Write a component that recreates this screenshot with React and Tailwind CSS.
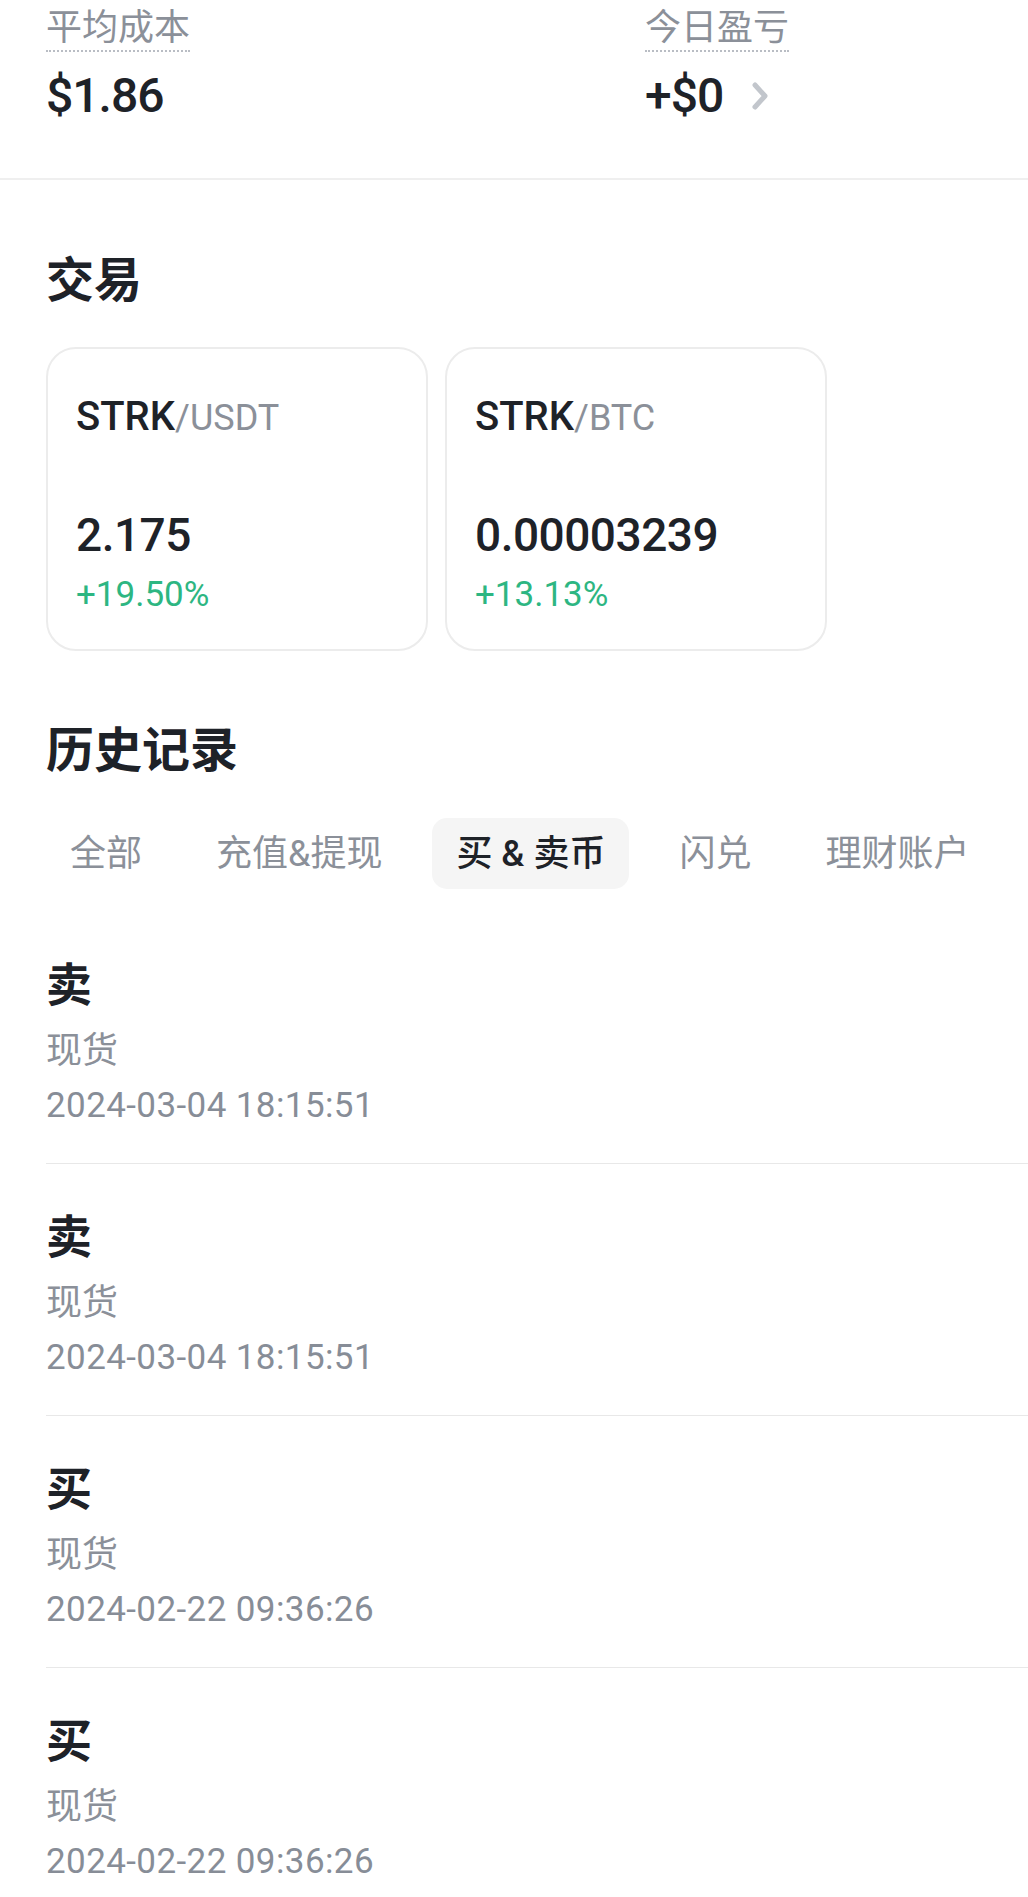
import React from "react";

const FONT = { fontFamily: '"Roboto", "Noto Sans CJK SC", sans-serif' };

function Card({ base, quote, price, change }) {
  return (
    <div className="w-[382px] h-[304px] rounded-[30px] border-2 border-[#ececec] pl-[28px] pt-[44px] flex flex-col">
      <div className="text-[40px] leading-[48px] font-medium text-[#1e2228]">
        {base}
        <span className="text-[36px] font-normal text-[#8b9099]">/{quote}</span>
      </div>
      <div className="mt-[65px] text-[46px] leading-[56px] font-medium tracking-[-0.5px] text-[#1e2228]">{price}</div>
      <div className="mt-[10px] text-[35px] leading-[44px] text-[#2db682]">{change}</div>
    </div>
  );
}

function Item({ type, date }) {
  return (
    <div className="ml-[46px] pt-[45px] pb-[33px] border-b border-[#e8e8e8] flex flex-col">
      <div className="text-[46px] leading-[56px] font-bold text-[#1e2228]">{type}</div>
      <div className="mt-[14px] text-[36px] leading-[48px] text-[#8b9099]">现货</div>
      <div className="mt-[7px] text-[35px] leading-[48px] tracking-[0.4px] text-[#878d97]">{date}</div>
    </div>
  );
}

export default function App() {
  const tabs = ["全部", "充值&提现", "买 & 卖币", "闪兑", "理财账户"];
  return (
    <div className="w-[1028px] h-[1897px] overflow-hidden bg-white" style={FONT}>
      {/* Top stats */}
      <div className="pt-[6px] pb-[54px] border-b-2 border-[#efefef] flex px-[46px]">
        <div className="w-[599px] flex flex-col items-start">
          <div className="text-[36px] leading-[44px] text-[#8b9099] border-b-2 border-dotted border-[#b9bdc4]">平均成本</div>
          <div className="mt-[16px] text-[48px] leading-[56px] font-medium tracking-[-1px] text-[#1e2228]">$1.86</div>
        </div>
        <div className="flex flex-col items-start">
          <div className="text-[36px] leading-[44px] text-[#8b9099] border-b-2 border-dotted border-[#b9bdc4]">今日盈亏</div>
          <div className="mt-[16px] flex items-center gap-[28px]">
            <span className="text-[48px] leading-[56px] font-medium tracking-[-1px] text-[#1e2228]">+$0</span>
            <svg width="18" height="28" viewBox="0 0 18 28" fill="none">
              <path d="M4 3 L14 14 L4 25" stroke="#c2c6cc" strokeWidth="5" strokeLinecap="round" strokeLinejoin="round" />
            </svg>
          </div>
        </div>
      </div>

      {/* 交易 */}
      <div className="px-[46px] mt-[71px]">
        <div className="text-[48px] leading-[60px] font-bold text-[#1e2228]">交易</div>
        <div className="mt-[36px] flex gap-[17px]">
          <Card base="STRK" quote="USDT" price="2.175" change="+19.50%" />
          <Card base="STRK" quote="BTC" price="0.00003239" change="+13.13%" />
        </div>
      </div>

      {/* 历史记录 */}
      <div className="pl-[46px] mt-[70px]">
        <div className="text-[48px] leading-[60px] font-bold text-[#1e2228]">历史记录</div>
        <div className="mt-[37px] flex gap-[26px]">
          {tabs.map((t, i) => (
            <div
              key={t}
              className={
                i === 2
                  ? "shrink-0 whitespace-nowrap h-[71px] px-[24px] rounded-[15px] bg-[#f5f5f5] flex items-center text-[36px] font-medium text-[#1e2228]"
                  : "shrink-0 whitespace-nowrap h-[71px] px-[24px] rounded-[15px] flex items-center text-[36px] text-[#8b9099]"
              }
            >
              {t}
            </div>
          ))}
        </div>
      </div>

      <div className="mt-[23px] flex flex-col">
        <Item type="卖" date="2024-03-04 18:15:51" />
        <Item type="卖" date="2024-03-04 18:15:51" />
        <Item type="买" date="2024-02-22 09:36:26" />
        <Item type="买" date="2024-02-22 09:36:26" />
      </div>
    </div>
  );
}
